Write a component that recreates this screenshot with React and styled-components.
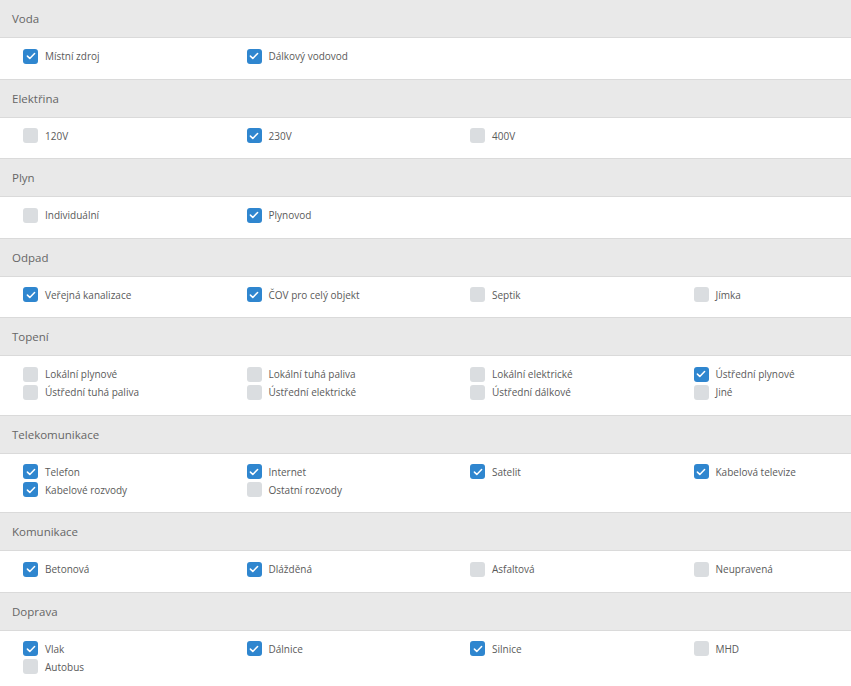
import React from 'react';
import styled, { createGlobalStyle } from 'styled-components';

const sections = [
  { title: 'Voda', items: [['Místní zdroj', true], ['Dálkový vodovod', true]] },
  { title: 'Elektřina', items: [['120V', false], ['230V', true], ['400V', false]] },
  { title: 'Plyn', items: [['Individuální', false], ['Plynovod', true]] },
  {
    title: 'Odpad',
    items: [['Veřejná kanalizace', true], ['ČOV pro celý objekt', true], ['Septik', false], ['Jímka', false]],
  },
  {
    title: 'Topení',
    items: [
      ['Lokální plynové', false],
      ['Lokální tuhá paliva', false],
      ['Lokální elektrické', false],
      ['Ústřední plynové', true],
      ['Ústřední tuhá paliva', false],
      ['Ústřední elektrické', false],
      ['Ústřední dálkové', false],
      ['Jiné', false],
    ],
  },
  {
    title: 'Telekomunikace',
    items: [
      ['Telefon', true],
      ['Internet', true],
      ['Satelit', true],
      ['Kabelová televize', true],
      ['Kabelové rozvody', true],
      ['Ostatní rozvody', false],
    ],
  },
  {
    title: 'Komunikace',
    items: [['Betonová', true], ['Dlážděná', true], ['Asfaltová', false], ['Neupravená', false]],
  },
  {
    title: 'Doprava',
    items: [['Vlak', true], ['Dálnice', true], ['Silnice', true], ['MHD', false], ['Autobus', false]],
  },
];

const App = () => (
  <Wrapper>
    <GlobalStyle />
    {sections.map((s) => (
      <Section key={s.title}>
        <Header>{s.title}</Header>
        <Body>
          {s.items.map(([label, checked]) => (
            <Option key={label}>
              <Box checked={checked}>
                {checked && (
                  <svg width="10" height="8" viewBox="0 0 10 8">
                    <path d="M1.4 4.1 L3.8 6.4 L8.6 1.5" fill="none" stroke="#fff" strokeWidth="1.5" strokeLinecap="round" strokeLinejoin="round" />
                  </svg>
                )}
              </Box>
              <Label>{label}</Label>
            </Option>
          ))}
        </Body>
      </Section>
    ))}
  </Wrapper>
);

export default App;

const GlobalStyle = createGlobalStyle`
  body {
    margin: 0;
    background: #fff;
    font-family: "Open Sans", "Noto Sans", sans-serif;
  }
`;

const Wrapper = styled.div`
  width: 851px;
  overflow: hidden;
`;

const Section = styled.div`
  display: flex;
  flex-direction: column;
`;

const Header = styled.div`
  height: 37px;
  display: flex;
  align-items: center;
  padding: 0 12px;
  background: #e9e9e9;
  border-bottom: 1px solid #dadada;
  color: #666;
  font-size: 11.5px;
`;

const Body = styled.div`
  display: grid;
  grid-template-columns: repeat(4, 223.5px);
  grid-auto-rows: 18px;
  padding: 9px 0 13.5px 23px;
  background: #fff;
  border-bottom: 1px solid #dadada;
`;

const Option = styled.label`
  display: flex;
  align-items: center;
  gap: 7px;
`;

const Box = styled.span`
  width: 15px;
  height: 15px;
  border-radius: 3px;
  background: ${(p) => (p.checked ? '#2f86cf' : '#dadde0')};
  display: flex;
  align-items: center;
  justify-content: center;
  flex-shrink: 0;
`;

const Label = styled.span`
  font-size: 10px;
  color: #5a5a5a;
  white-space: nowrap;
`;
